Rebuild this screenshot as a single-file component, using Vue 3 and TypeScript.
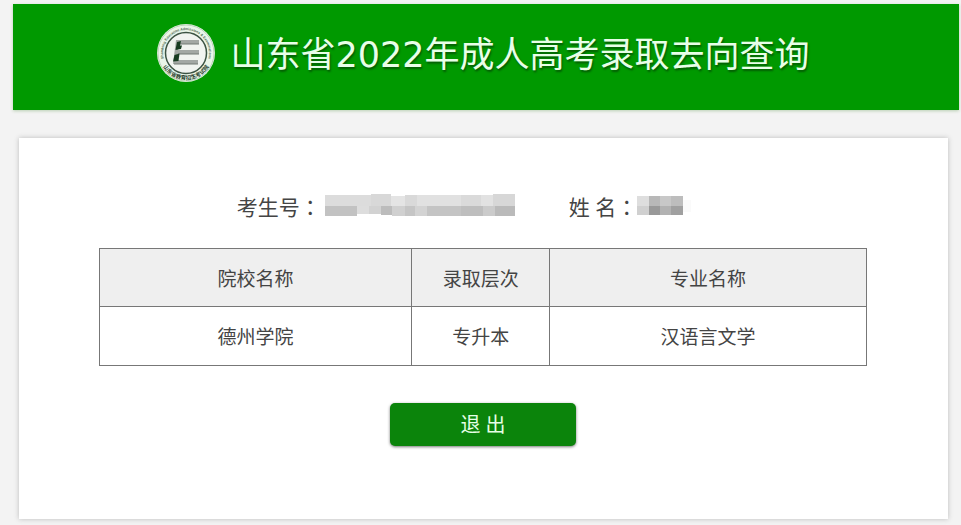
<script setup lang="ts">
interface Block {
  x: number
  y: number
  w: number
  h: number
  fill: string
}

interface Admission {
  school: string
  level: string
  major: string
}

const numberMask: Block[] = [
  { x: 0, y: 1, w: 46, h: 11, fill: '#dcdcdc' },
  { x: 46, y: 0, w: 20, h: 12, fill: '#d8d8d8' },
  { x: 66, y: 2, w: 14, h: 10, fill: '#e4e4e4' },
  { x: 80, y: 1, w: 12, h: 11, fill: '#d9d9d9' },
  { x: 92, y: 1, w: 44, h: 11, fill: '#e1e1e1' },
  { x: 136, y: 1, w: 20, h: 11, fill: '#dadada' },
  { x: 156, y: 1, w: 12, h: 11, fill: '#e2e2e2' },
  { x: 168, y: 0, w: 22, h: 12, fill: '#d7d7d7' },
  { x: 0, y: 12, w: 32, h: 10, fill: '#c2c2c2' },
  { x: 32, y: 12, w: 12, h: 8, fill: '#dddddd' },
  { x: 44, y: 12, w: 12, h: 8, fill: '#d2d2d2' },
  { x: 56, y: 12, w: 11, h: 9, fill: '#bcbcbc' },
  { x: 67, y: 12, w: 13, h: 10, fill: '#d0d0d0' },
  { x: 80, y: 12, w: 10, h: 10, fill: '#c5c5c5' },
  { x: 90, y: 12, w: 12, h: 10, fill: '#d3d3d3' },
  { x: 102, y: 12, w: 34, h: 10, fill: '#c4c4c4' },
  { x: 136, y: 12, w: 22, h: 10, fill: '#bebebe' },
  { x: 158, y: 12, w: 12, h: 10, fill: '#cbcbcb' },
  { x: 170, y: 12, w: 20, h: 10, fill: '#bababa' },
]

const nameMask: Block[] = [
  { x: 0, y: 0, w: 12, h: 10, fill: '#dedede' },
  { x: 12, y: 0, w: 11, h: 10, fill: '#b8b8b8' },
  { x: 23, y: 0, w: 11, h: 10, fill: '#c8c8c8' },
  { x: 34, y: 0, w: 12, h: 10, fill: '#bdbdbd' },
  { x: 0, y: 10, w: 12, h: 9, fill: '#d0d0d0' },
  { x: 12, y: 10, w: 11, h: 9, fill: '#999999' },
  { x: 23, y: 10, w: 11, h: 9, fill: '#b2b2b2' },
  { x: 34, y: 10, w: 12, h: 9, fill: '#a0a0a0' },
  { x: 46, y: 4, w: 8, h: 12, fill: '#fafafa' },
]

const admissions: Admission[] = [
  { school: '德州学院', level: '专升本', major: '汉语言文学' },
]
</script>

<template>
  <div class="page">
    <header class="banner">
      <svg class="logo" viewBox="0 0 120 120" aria-hidden="true">
        <defs>
          <path id="ring-top" d="M18 79 A46 46 0 1 1 102 79" />
          <path id="ring-bottom" d="M9 75 A53 53 0 0 0 111 75" />
        </defs>
        <circle cx="60" cy="60" r="58" fill="#eaf5e8" />
        <circle cx="60" cy="60" r="56" fill="none" stroke="#8fae8f" stroke-width="1" />
        <circle cx="60" cy="60" r="41" fill="#f1f4f0" stroke="#3c5343" stroke-width="3" />
        <text class="ring-en" text-anchor="middle">
          <textPath href="#ring-top" startOffset="50%">Shandong Education Admissions &amp; Examinations</textPath>
        </text>
        <text class="ring-cn" text-anchor="middle">
          <textPath href="#ring-bottom" startOffset="50%">山东省教育招生考试院</textPath>
        </text>
        <path d="M40 34 H86 V42 H46 L44 54 H86 V62 H43 L41 74 H84 V82 H34 Z" fill="#a3a8a4" />
        <path d="M46 42 H86 M44 62 H86 M36 82 H84" stroke="#737b75" stroke-width="2" />
        <path d="M42 38 L50 36 L48 45 L52 45 L50 52 L39 54 Z" fill="#173c21" />
        <path d="M37 64 L47 61 L45 76 L34 77 Z" fill="#173c21" />
      </svg>
      <h1>山东省2022年成人高考录取去向查询</h1>
    </header>

    <main class="card">
      <dl class="candidate">
        <div class="field">
          <dt>考生号<span class="colon">：</span></dt>
          <dd>
            <svg class="number-mask" viewBox="0 0 190 22" aria-hidden="true">
              <rect v-for="(b, i) in numberMask" :key="i" :x="b.x" :y="b.y" :width="b.w" :height="b.h" :fill="b.fill" />
            </svg>
          </dd>
        </div>
        <div class="field">
          <dt>姓 名<span class="colon">：</span></dt>
          <dd>
            <svg class="name-mask" viewBox="0 0 54 19" aria-hidden="true">
              <rect v-for="(b, i) in nameMask" :key="i" :x="b.x" :y="b.y" :width="b.w" :height="b.h" :fill="b.fill" />
            </svg>
          </dd>
        </div>
      </dl>

      <table class="result">
        <thead>
          <tr>
            <th class="school" scope="col">院校名称</th>
            <th class="level" scope="col">录取层次</th>
            <th scope="col">专业名称</th>
          </tr>
        </thead>
        <tbody>
          <tr v-for="a in admissions" :key="a.school">
            <td>{{ a.school }}</td>
            <td>{{ a.level }}</td>
            <td>{{ a.major }}</td>
          </tr>
        </tbody>
      </table>

      <button type="button" class="exit">退 出</button>
    </main>
  </div>
</template>

<style>
body {
  margin: 0;
  background: #f3f3f3;
}
</style>

<style scoped>
.page {
  padding: 4px 2px 6px 13px;
  font-family: "Noto Sans", "Noto Sans CJK SC", sans-serif;
  color: #444;
}

.banner {
  display: flex;
  align-items: center;
  justify-content: center;
  gap: 14px;
  height: 106px;
  padding-right: 6px;
  box-sizing: border-box;
  background: #009900;
  box-shadow: 0 1px 3px #b9cfb2;
}

.logo {
  width: 60px;
  height: 60px;
  margin-bottom: 8px;
}

.ring-en {
  font: 700 7px "Liberation Sans", sans-serif;
  fill: #4c6a50;
}

.ring-cn {
  font: 700 11px "Noto Sans CJK SC", sans-serif;
  fill: #263d2b;
}

h1 {
  margin: 0 0 4px;
  font-family: "DejaVu Sans", "Noto Sans CJK SC", sans-serif;
  font-size: 35px;
  line-height: 48px;
  font-weight: 400;
  color: #e8ffe8;
  text-shadow: 1px 2px 2px #045c04;
}

.card {
  display: flex;
  flex-direction: column;
  align-items: center;
  margin: 28px 11px 0 6px;
  padding: 54px 81px 73px 80px;
  background: #fff;
  box-shadow: 0 0 5px #bbb;
}

.candidate {
  display: flex;
  justify-content: center;
  gap: 54px;
  margin: 0 0 26px;
  padding-right: 38px;
  font-size: 21px;
  line-height: 30px;
}

.field {
  display: flex;
  align-items: center;
  gap: 4px;
}

.field:last-child {
  gap: 0;
}

dt,
dd {
  margin: 0;
}

.colon {
  font-family: "Noto Sans CJK TC", sans-serif;
  line-height: 1;
}

dd {
  display: flex;
  margin-bottom: 4px;
}

.number-mask {
  width: 190px;
  height: 22px;
}

.name-mask {
  width: 54px;
  height: 19px;
}

.result {
  width: 100%;
  table-layout: fixed;
  border-collapse: collapse;
  font-size: 19px;
  line-height: 28px;
}

th,
td {
  height: 58px;
  padding: 2px 0 0;
  box-sizing: border-box;
  border: 1px solid #777;
  text-align: center;
  font-weight: 400;
}

td {
  height: 59px;
}

th {
  background: #efefef;
}

.school {
  width: 40.7%;
}

.level {
  width: 18%;
}

.exit {
  width: 186px;
  height: 43px;
  margin-top: 37px;
  padding: 0;
  border: 0;
  border-radius: 5px;
  background: #0b840b;
  box-shadow: 0 1px 3px #777;
  color: #e6ffe6;
  font-family: inherit;
  font-size: 20px;
  line-height: 28px;
  cursor: pointer;
}
</style>
